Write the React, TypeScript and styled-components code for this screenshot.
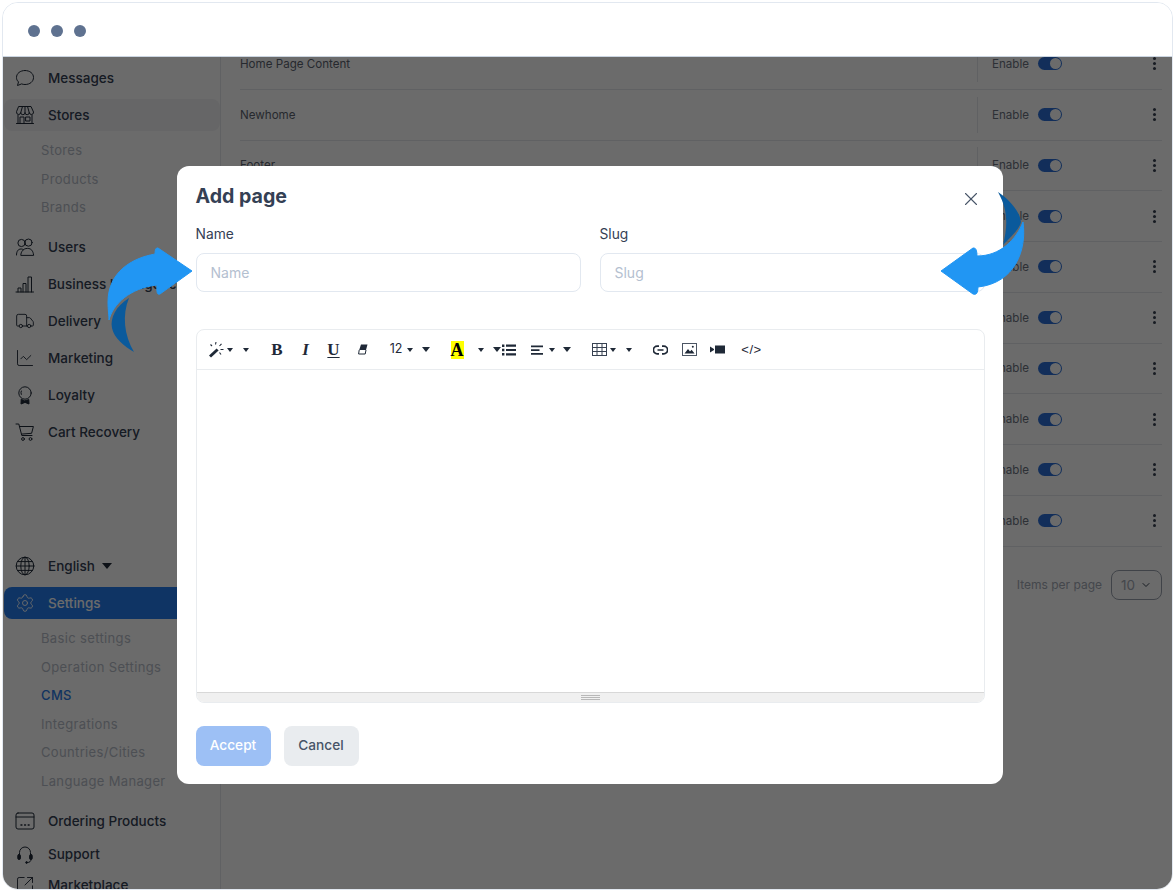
import React from "react";
import styled, { createGlobalStyle } from "styled-components";
import { Truck, ChartLine, Settings, SquareArrowOutUpRight, X, ChevronDown } from "lucide-react";

const Global = createGlobalStyle`
  html, body { margin: 0; padding: 0; background: #fff; }
  body { font-family: "Inter", "Noto Sans", "Liberation Sans", sans-serif; }
  * { box-sizing: border-box; }
`;

const Page = styled.div`
  width: 1176px; height: 895px; padding: 2px 3px 5px 2px; background: #fff; overflow: hidden;
`;
const Frame = styled.div`
  position: relative; height: 888px; display: flex; flex-direction: column;
  border: 1px solid #e2e8f0; border-radius: 16px; overflow: hidden; background: #fff;
`;
const TopBar = styled.div`
  flex: 0 0 54px; display: flex; align-items: center; gap: 11px; padding: 2px 0 0 25px;
  background: #fff; border-bottom: 1px solid #cbd5e1;
`;
const Dot = styled.span`
  width: 12px; height: 12px; border-radius: 50%; background: #5f7290;
`;
const Body = styled.div`
  position: relative; flex: 1; display: flex; min-height: 0; overflow: hidden; background: #fff;
`;
const Sidebar = styled.nav`
  flex: 0 0 218px; padding: 0 0 0 1px; border-right: 1px solid #e5e7eb; overflow: hidden;
  display: flex; flex-direction: column;
`;
const Item = styled.div<{ $active?: boolean; $soft?: boolean; $mt?: number }>`
  flex: none; display: flex; align-items: center; gap: 13px;
  height: 32px; margin-top: ${(p) => p.$mt ?? 5}px; padding-left: 11px; width: 216px;
  font-size: 13.5px; font-weight: 500;
  color: ${(p) => (p.$active ? "#fff" : "#344054")};
  background: ${(p) => (p.$active ? "#247cee" : p.$soft ? "#f3f4f6" : "transparent")};
  border-radius: ${(p) => (p.$soft ? "8px" : "8px 0 0 8px")};
  & > svg { flex: none; }
`;
const SubList = styled.div`
  flex: none; display: flex; flex-direction: column; margin: 5px 0 4.5px; padding-left: 37px;
`;
const SubItem = styled.div<{ $current?: boolean }>`
  height: 28.5px; display: flex; align-items: center; font-size: 13px; letter-spacing: 0.35px;
  color: ${(p) => (p.$current ? "#2c7be5" : "#b6bcc8")};
  font-weight: ${(p) => (p.$current ? 500 : 400)};
`;
const Triangle = styled.i<{ $w?: number; $tone?: string }>`
  display: block; flex: none; width: 0; height: 0;
  border-left: ${(p) => (p.$w ?? 8) / 2}px solid transparent;
  border-right: ${(p) => (p.$w ?? 8) / 2}px solid transparent;
  border-top: ${(p) => Math.round((p.$w ?? 8) * 0.6)}px solid ${(p) => p.$tone ?? "#1f2937"};
`;
const LangCaret = styled(Triangle)`
  margin-left: -6px;
`;
const Main = styled.main`
  flex: 1; min-width: 0; padding: 0 10px 0 19px; overflow: hidden;
`;
const Table = styled.div`
  margin-top: -18px;
`;
const Row = styled.div`
  height: 50.75px; display: flex; align-items: center; border-bottom: 1px solid #e5e7eb;
  font-size: 11.6px; color: #5c6370;
`;
const RowName = styled.div`
  flex: 1; color: #5c6370;
`;
const StatusCell = styled.div`
  width: 185px; height: 36px; display: flex; align-items: center; padding-left: 14px;
  border-left: 1px solid #e5e7eb; font-size: 11.6px; color: #6b7280;
`;
const Toggle = styled.span`
  position: relative; width: 24px; height: 13px; margin-left: 9px; border-radius: 7px; background: #2c6fd6;
  &::after {
    content: ""; position: absolute; right: 1px; top: 1px; width: 11px; height: 11px;
    border-radius: 50%; background: #fff;
  }
`;
const Kebab = styled.span`
  margin-left: auto; margin-right: 6px; display: flex; flex-direction: column; gap: 2px;
  & > i { width: 3px; height: 3px; border-radius: 50%; background: #374151; display: block; }
`;
const Pager = styled.div`
  display: flex; align-items: center; justify-content: flex-end; gap: 9px; margin-top: 23px;
  font-size: 12px; color: #a3a9b5;
`;
const PageSelect = styled.div`
  width: 51px; height: 30px; display: flex; align-items: center; justify-content: space-between;
  padding: 0 9px; border: 1px solid #9aa1ad; border-radius: 8px; font-size: 13.5px; color: #a3a9b5;
  & > svg { color: #374151; }
`;
const Overlay = styled.div`
  position: absolute; inset: 0; display: flex; justify-content: center; align-items: flex-start;
  padding: 109px 0 0 4px; background: rgba(0, 0, 0, 0.58);
`;
const Modal = styled.section`
  width: 826px; height: 618px; padding: 19px 18px 0 19px; background: #fff; border-radius: 12px;
  display: flex; flex-direction: column;
`;
const ModalHead = styled.header`
  display: flex; align-items: flex-start; justify-content: space-between; height: 41px;
`;
const Title = styled.h2`
  margin: 0; font-size: 19.6px; line-height: 22px; font-weight: 700; color: #344054;
`;
const Close = styled.span`
  display: flex; margin: 3px 3px 0 0; color: #475467;
`;
const Fields = styled.div`
  display: grid; grid-template-columns: 385px 385px; column-gap: 19px;
`;
const Field = styled.label`
  display: flex; flex-direction: column; gap: 10px; font-size: 13.8px; line-height: 17px; color: #344054;
`;
const Input = styled.div`
  height: 39px; display: flex; align-items: center; padding-left: 14px; border: 1px solid #e2e8f0;
  border-radius: 8px; font-size: 14px; color: #b4c0d0; background: #fff;
`;
const Editor = styled.div`
  margin-top: 37px; width: 789px; height: 374px; border: 1px solid #e9ecef; border-radius: 8px;
  display: flex; flex-direction: column; overflow: hidden;
`;
const Toolbar = styled.div`
  flex: 0 0 40px; display: flex; align-items: center; padding-left: 11px;
  border-bottom: 1px solid #e9ecef; color: #1f2937;
`;
const Tool = styled.span<{ $ml?: number; $w: number }>`
  flex: none; width: ${(p) => p.$w}px; margin-left: ${(p) => p.$ml ?? 0}px;
  display: flex; align-items: center; justify-content: center; line-height: 1; color: #1f2937;
`;
const Glyph = styled(Tool)<{ $italic?: boolean; $under?: boolean }>`
  font-family: "Liberation Serif", serif; font-weight: 700; font-size: 17px;
  font-style: ${(p) => (p.$italic ? "italic" : "normal")};
  text-decoration: ${(p) => (p.$under ? "underline" : "none")};
  text-underline-offset: 2px;
`;
const SizeText = styled(Tool)`
  font-size: 12.5px;
`;
const HighlightA = styled(Glyph)`
  height: 18px; background: #ffff00; font-size: 18px; color: #000;
`;
const Code = styled(Tool)`
  font-size: 13px; letter-spacing: 0.5px; font-family: "Liberation Sans", sans-serif;
`;
const EditArea = styled.div`
  flex: 1; background: #fff;
`;
const StatusBar = styled.div`
  flex: 0 0 10px; background: #f0f0f0; border-top: 1px solid #d8d8d8;
  display: flex; align-items: center; justify-content: center;
`;
const Grip = styled.span`
  width: 19px; height: 5px; border-top: 1px solid #b8b8b8; border-bottom: 1px solid #b8b8b8; position: relative;
  &::after { content: ""; position: absolute; left: 0; right: 0; top: 1px; height: 1px; background: #b8b8b8; }
`;
const Actions = styled.div`
  display: flex; gap: 13px; margin-top: 23px;
`;
const Button = styled.button<{ $primary?: boolean }>`
  height: 40px; padding: 0 0 2px; width: 75px; border: 0; border-radius: 8px;
  font-family: inherit; font-size: 13.7px; font-weight: 500;
  color: ${(p) => (p.$primary ? "#fff" : "#475467")};
  background: ${(p) => (p.$primary ? "#9dc0f5" : "#e9ecef")};
`;
const Arrow = styled.svg<{ $left: number; $top: number }>`
  position: absolute; left: ${(p) => p.$left}px; top: ${(p) => p.$top}px; overflow: visible;
`;

const NavIcon = ({ children }: { children: React.ReactNode }) => (
  <svg width="20" height="20" viewBox="0 0 20 20" fill="none" stroke="#1f2937" strokeWidth="1" strokeLinecap="round" strokeLinejoin="round">
    {children}
  </svg>
);
const TinyIcon = ({ w, h, children }: { w: number; h: number; children: React.ReactNode }) => (
  <svg width={w} height={h} viewBox={`0 0 ${w} ${h}`} fill="none">
    {children}
  </svg>
);

const MessageIcon = () => (
  <NavIcon><path d="M10 2.5c5 0 8.5 3 8.5 7s-3.5 7-8.5 7c-1.3 0-2.4-.2-3.4-.6L2.5 17.5l1-3.6C2 12.6 1.5 11.2 1.5 9.5c0-4 3.5-7 8.5-7z" /></NavIcon>
);
const StoreIcon = () => (
  <NavIcon>
    <path d="M4 1.5h12l2.5 5.5a2.1 2.1 0 0 1-4.25.6 2.1 2.1 0 0 1-4.25 0 2.1 2.1 0 0 1-4.25 0A2.1 2.1 0 0 1 1.5 7z" />
    <path d="M7.5 1.5 5.75 7.6M10 1.5v6.1M12.5 1.5l1.75 6.1" />
    <path d="M3 10v8.5h14V10M1.5 18.5h17M5 18.5v-6.5h4v6.5M11 12h4v4h-4z" />
  </NavIcon>
);
const UsersIcon = () => (
  <NavIcon>
    <circle cx="6.5" cy="6" r="3.6" />
    <circle cx="13.5" cy="5.6" r="3.6" />
    <path d="M1.5 18c0-3.4 1.4-6 4.5-6 1 0 1.8.2 2.5.8M5.8 18c.2-3 2-6.6 6.8-6.6 3.6 0 5.5 2.4 6 6.6z" />
  </NavIcon>
);
const BarsIcon = () => (
  <NavIcon><path d="M1 18h17.5M3 18v-4h3v4M8 18V9.5h3V18M13 18V3h3.5v15" /></NavIcon>
);
const AwardIcon = () => (
  <NavIcon>
    <circle cx="10" cy="8" r="6.2" />
    <path d="M6.3 9.4A4 4 0 0 1 6.3 6" />
    <path d="M6.2 14.6 6 19l4-1.6 4 1.6-.2-4.4-3.8 1.2z" fill="#1f2937" />
  </NavIcon>
);
const CartIcon = () => (
  <NavIcon>
    <path d="M1 2h2.8l3 11.5h10.2" />
    <path d="M4.4 4.5h14l-1.8 6.8-10 .8" />
    <circle cx="8" cy="17" r="1.4" />
    <circle cx="15.5" cy="17" r="1.4" />
  </NavIcon>
);
const GlobeIcon = () => (
  <NavIcon>
    <circle cx="10" cy="10" r="8.8" />
    <ellipse cx="10" cy="10" rx="4.2" ry="8.8" />
    <path d="M10 1.2v17.6M1.2 10h17.6M2.6 5.6h14.8M2.6 14.4h14.8" />
  </NavIcon>
);
const WindowIcon = () => (
  <NavIcon>
    <rect x="1" y="2" width="18" height="16" rx="2" />
    <path d="M1 6h18" />
    <path d="M6 14h.9M9.6 14h.9M13.2 14h.9" strokeWidth="1.5" />
  </NavIcon>
);
const HeadsetIcon = () => (
  <NavIcon>
    <path d="M4.5 11V8.5a5.5 5.5 0 0 1 11 0V11" />
    <rect x="2.8" y="10.5" width="2.6" height="5" rx="1.2" fill="#1f2937" />
    <rect x="14.6" y="10.5" width="2.6" height="5" rx="1.2" fill="#1f2937" />
    <path d="M16 15.5c0 2-1.4 3-3.4 3" />
    <circle cx="11.6" cy="18.5" r=".9" fill="#1f2937" />
  </NavIcon>
);
const WandIcon = () => (
  <TinyIcon w={16} h={17}>
    <path d="M1 14.5 8.6 7.4l2 2L3 16.5z" fill="#1f2937" />
    <path d="M7.5 3.5 8 1M11.5 5l2-2.2M12.5 8.5h3M11.5 11.5l1.5 2M4 5 2.5 3.5" stroke="#1f2937" strokeWidth="1.1" />
  </TinyIcon>
);
const EraserIcon = () => (
  <TinyIcon w={10} h={11}>
    <path d="M3 .5h6.5L8 6H1.2z" fill="#1f2937" />
    <path d="M1.2 6 .6 10h6.6L8 6" stroke="#1f2937" strokeWidth="1" />
  </TinyIcon>
);
const ListIcon = () => (
  <TinyIcon w={14} h={12}>
    <path d="M0 .5h2.4v2.4H0zM0 4.8h2.4v2.4H0zM0 9.1h2.4v2.4H0zM4 .5h10v2.2H4zM4 4.9h10v2.2H4zM4 9.3h10v2.2H4z" fill="#1f2937" />
  </TinyIcon>
);
const AlignIcon = () => (
  <TinyIcon w={12} h={10}>
    <path d="M0 .5h12v1.7H0zM0 4.2h8.5v1.7H0zM0 8h12v1.7H0z" fill="#1f2937" />
  </TinyIcon>
);
const TableIcon = () => (
  <TinyIcon w={15} h={13}>
    <rect x=".5" y=".5" width="14" height="12" stroke="#374151" />
    <path d="M5 .5v12M10 .5v12M.5 4.5h14M.5 8.5h14" stroke="#374151" />
  </TinyIcon>
);
const LinkIcon = () => (
  <TinyIcon w={15} h={10}>
    <path d="M6 1.2H4.2a3.8 3.8 0 0 0 0 7.6H6M9 1.2h1.8a3.8 3.8 0 0 1 0 7.6H9M4.5 5h6" stroke="#1f2937" strokeWidth="1.7" />
  </TinyIcon>
);
const ImageIcon = () => (
  <TinyIcon w={15} h={13}>
    <rect x=".5" y=".5" width="14" height="12" stroke="#4b5563" />
    <path d="M2.5 10.5 6 6l2 2.4 1.6-1.6 3 3.7z" fill="#1f2937" />
    <circle cx="10.8" cy="3.8" r="1" fill="#1f2937" />
  </TinyIcon>
);
const VideoIcon = () => (
  <TinyIcon w={15} h={9}>
    <path d="M5 .5h10v8H5zM0 1.5 4 4v1L0 7.5z" fill="#1f2937" />
  </TinyIcon>
);

const names = ["Home Page Content", "Newhome", "Footer", "", "", "", "", "", "", ""];
const luc = { size: 20, strokeWidth: 1.1, color: "#1f2937" };

export default function App() {
  return (
    <Page>
      <Global />
      <Frame>
        <TopBar><Dot /><Dot /><Dot /></TopBar>
        <Body>
          <Sidebar>
            <Item><MessageIcon />Messages</Item>
            <Item $soft><StoreIcon />Stores</Item>
            <SubList>
              <SubItem>Stores</SubItem>
              <SubItem>Products</SubItem>
              <SubItem>Brands</SubItem>
            </SubList>
            <Item><UsersIcon />Users</Item>
            <Item><BarsIcon />Business Intelligence</Item>
            <Item><Truck {...luc} />Delivery</Item>
            <Item><ChartLine {...luc} />Marketing</Item>
            <Item><AwardIcon />Loyalty</Item>
            <Item><CartIcon />Cart Recovery</Item>
            <Item $mt={102}><GlobeIcon />English <LangCaret $w={10} /></Item>
            <Item $active><Settings {...luc} color="#fff" />Settings</Item>
            <SubList>
              <SubItem>Basic settings</SubItem>
              <SubItem>Operation Settings</SubItem>
              <SubItem $current>CMS</SubItem>
              <SubItem>Integrations</SubItem>
              <SubItem>Countries/Cities</SubItem>
              <SubItem>Language Manager</SubItem>
            </SubList>
            <Item><WindowIcon />Ordering Products</Item>
            <Item $mt={1}><HeadsetIcon />Support</Item>
            <Item $mt={-1}><SquareArrowOutUpRight {...luc} />Marketplace</Item>
          </Sidebar>
          <Main>
            <Table>
              {names.map((n, i) => (
                <Row key={i}>
                  <RowName>{n}</RowName>
                  <StatusCell>
                    Enable
                    <Toggle />
                    <Kebab><i /><i /><i /></Kebab>
                  </StatusCell>
                </Row>
              ))}
            </Table>
            <Pager>
              Items per page
              <PageSelect>10 <ChevronDown size={12} strokeWidth={2} /></PageSelect>
            </Pager>
          </Main>
          <Overlay>
            <Modal>
              <ModalHead>
                <Title>Add page</Title>
                <Close><X size={22} strokeWidth={1.2} /></Close>
              </ModalHead>
              <Fields>
                <Field>Name<Input>Name</Input></Field>
                <Field>Slug<Input>Slug</Input></Field>
              </Fields>
              <Editor>
                <Toolbar>
                  <Tool $w={16}><WandIcon /></Tool>
                  <Tool $w={6} $ml={3}><Triangle $w={6} /></Tool>
                  <Tool $w={7} $ml={10}><Triangle $w={7} /></Tool>
                  <Glyph $w={11} $ml={22}>B</Glyph>
                  <Glyph $w={8} $ml={19} $italic>I</Glyph>
                  <Glyph $w={12} $ml={18} $under>U</Glyph>
                  <Tool $w={10} $ml={18}><EraserIcon /></Tool>
                  <SizeText $w={11} $ml={23}>12</SizeText>
                  <Tool $w={6} $ml={5}><Triangle $w={6} /></Tool>
                  <Tool $w={8} $ml={9}><Triangle $w={8} /></Tool>
                  <HighlightA $w={13} $ml={21}>A</HighlightA>
                  <Tool $w={6} $ml={14}><Triangle $w={6} /></Tool>
                  <Tool $w={8} $ml={9}><Triangle $w={8} /></Tool>
                  <Tool $w={14} $ml={1}><ListIcon /></Tool>
                  <Tool $w={12} $ml={15}><AlignIcon /></Tool>
                  <Tool $w={6} $ml={6}><Triangle $w={6} /></Tool>
                  <Tool $w={8} $ml={8}><Triangle $w={8} /></Tool>
                  <Tool $w={15} $ml={21}><TableIcon /></Tool>
                  <Tool $w={6} $ml={3}><Triangle $w={6} /></Tool>
                  <Tool $w={7} $ml={10}><Triangle $w={7} /></Tool>
                  <Tool $w={15} $ml={20}><LinkIcon /></Tool>
                  <Tool $w={15} $ml={14}><ImageIcon /></Tool>
                  <Tool $w={15} $ml={13}><VideoIcon /></Tool>
                  <Code $w={20} $ml={17}>&lt;/&gt;</Code>
                </Toolbar>
                <EditArea />
                <StatusBar><Grip /></StatusBar>
              </Editor>
              <Actions>
                <Button $primary>Accept</Button>
                <Button>Cancel</Button>
              </Actions>
            </Modal>
          </Overlay>
        </Body>
        <Arrow $left={97} $top={242} width="96" height="112" viewBox="100 245 96 112" aria-hidden="true">
          <path d="M192 271 L158 248 Q155 247 155 254 C132 258 108 272 108 302 C108 310 109 315 109 320 C113 304 130 288 157 285 Q156 296 160 294 Z" fill="#2196f3" stroke="#2196f3" strokeWidth="1" strokeLinejoin="round" />
          <path d="M129 298 C116 306 110 318 112 328 C114 338 124 346 134 352 C124 335 122 315 129 298Z" fill="#0a5a9c" />
        </Arrow>
        <Arrow $left={936} $top={187} width="92" height="112" viewBox="939 190 92 112" aria-hidden="true">
          <path d="M941 271 L973 248 Q977 247 977 256 C1000 256 1016 240 1023 222 C1027 250 1015 283 978 287 Q978 296 973 294 Z" fill="#2196f3" stroke="#2196f3" strokeWidth="1" strokeLinejoin="round" />
          <path d="M998 192 C1010 200 1020 212 1021 222 C1020 228 1012 236 1003 245 C1008 225 1008 210 998 192Z" fill="#0a5a9c" />
        </Arrow>
      </Frame>
    </Page>
  );
}
